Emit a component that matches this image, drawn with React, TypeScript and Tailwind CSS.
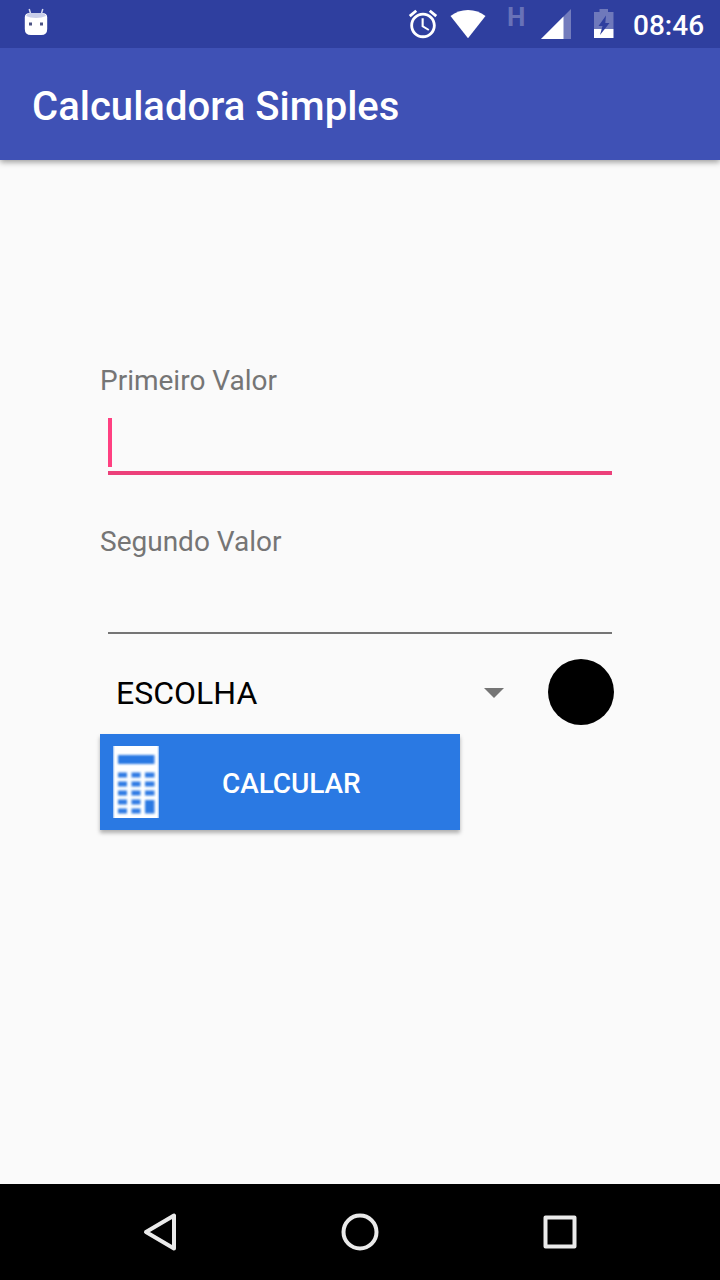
import React from 'react';

function AndroidHead() {
  return (
    <svg width="24" height="28" viewBox="0 0 24 28" className="mt-2">
      <path d="M5.200 1 7 7M18.800 1 17 7" stroke="#d5d9ee" strokeWidth="1.5" />
      <path d="M.8 9Q1 5 6 5h12q5 0 5.200 4v12q0 6-6 6H7q-6.200 0-6.200-6Z" fill="#fff" />
      <path d="M2 8Q3 5 7 5h10q4 0 5 3Q18 10 12 10T2 8Z" fill="#c9cfea" />
      <path d="M5 14.500h3v3H5zM16 14.500h3v3h-3z" fill="#4b5384" />
    </svg>
  );
}

function Alarm() {
  return (
    <svg width="34" height="34" viewBox="0 0 24 24" fill="#fff" className="mt-[7px]">
      <path d="M22 5.720l-4.600-3.860-1.290 1.530 4.600 3.860L22 5.720zM7.880 3.390L6.600 1.860 2 5.710l1.290 1.530 4.590-3.850zM12.500 8H11v6l4.750 2.850.750-1.230-4-2.370V8zM12 4c-4.970 0-9 4.030-9 9s4.020 9 9 9c4.970 0 9-4.030 9-9s-4.030-9-9-9zm0 16c-3.870 0-7-3.130-7-7s3.130-7 7-7 7 3.130 7 7-3.130 7-7 7z" />
    </svg>
  );
}

function Wifi() {
  return (
    <svg width="36" height="30" viewBox="0 0 36 30" className="ml-[10px] mt-[9px]">
      <path d="M.5 7Q8 1 18 1t17.500 6L18 29.200Z" fill="#fff" />
    </svg>
  );
}

function Signal() {
  return (
    <svg width="30" height="30" viewBox="0 0 30 30" className="ml-4 mt-[9px]">
      <path d="M0 30 30 0v30Z" fill="#737cbd" />
      <path d="M0 30 22.500 7.500V30Z" fill="#fff" />
    </svg>
  );
}

function Battery() {
  return (
    <svg width="20" height="30" viewBox="0 0 20 30" className="ml-[23px] mt-[9px]">
      <path d="M5.500 0h8.500v3H19.500v17H0V3h5.500Z" fill="#6f79bb" />
      <path d="M0 20h19.500v9H0Z" fill="#fff" />
      <path d="m12 6.500-7.500 10.500h4L6 26l9.500-12h-4.200Z" fill="#2f3f9f" />
    </svg>
  );
}

function CalculatorIcon() {
  const rows = [27, 36, 45, 54, 63];
  return (
    <svg width="48" height="74" viewBox="-1 -1 48 74" className="ml-3 mt-[11px] shrink-0">
      <defs>
        <filter id="soft-keys" x="-10%" y="-10%" width="120%" height="120%">
          <feGaussianBlur stdDeviation="0.9" />
        </filter>
      </defs>
      <path d="M.3 0h45.400v72H.3Z" fill="#fff" />
      <path d="M0 0h1.300v72H0zM44.700 0H46v72h-1.300z" fill="#a9caf5" />
      <g fill="#2a79e3" filter="url(#soft-keys)">
        <rect x="5" y="9" width="36.500" height="9" />
        {rows.map((y, i) => (
          <React.Fragment key={y}>
            <rect x="5" y={y - 0.5} width="9" height="5" />
            <rect x="18.500" y={y - 0.5} width="9" height="5" />
            {i < 3 && <rect x="32" y={y - 0.5} width="9.500" height="5" />}
          </React.Fragment>
        ))}
        <rect x="32" y="54" width="9.500" height="13.500" />
      </g>
    </svg>
  );
}

export default function App() {
  return (
    <div className="flex h-[1280px] w-[720px] flex-col overflow-hidden bg-[#fafafa] font-['Roboto',sans-serif]">
      <div className="z-20 flex h-12 shrink-0 items-start bg-[#2f3f9f] pl-6 pr-[15px]">
        <AndroidHead />
        <div className="flex flex-1 items-start justify-end">
          <Alarm />
          <Wifi />
          <span className="ml-[21px] mt-[4px] w-[18px] text-[26px] font-bold leading-[26px] text-[#6872b8]">H</span>
          <Signal />
          <Battery />
          <span className="ml-[19px] mt-[10px] w-[72px] whitespace-nowrap text-[28px] font-medium leading-8 text-white">08:46</span>
        </div>
      </div>
      <header className="z-10 flex h-28 shrink-0 items-center bg-[#3f51b5] pl-8 shadow-[0_2px_6px_rgba(0,0,0,0.4)]">
        <h1 className="pt-[6px] text-[40px] font-medium leading-[48px] tracking-[0.03px] text-white">Calculadora Simples</h1>
      </header>
      <main className="flex flex-1 flex-col pl-[100px] pt-[202px]">
        <label className="h-[38px] text-[28px] leading-[38px] text-[#757575]">Primeiro Valor</label>
        <div className="ml-2 mt-[18px] flex h-[57px] w-[504px] border-b-4 border-[#ec407a]">
          <span className="h-[49px] w-1 bg-[#ff4081]" />
        </div>
        <label className="mt-12 h-[38px] text-[28px] leading-[38px] text-[#757575]">Segundo Valor</label>
        <div className="ml-2 h-[73px] w-[504px] border-b-2 border-[#757575]" />
        <div className="mt-[18px] flex h-20 items-center">
          <span className="ml-4 w-[368px] pt-[2px] text-[32px] leading-[38px] text-black">ESCOLHA</span>
          <svg width="20" height="10" viewBox="0 0 20 10" fill="#757575" className="mt-[2px]">
            <path d="M0 0h20L10 10Z" />
          </svg>
          <span className="ml-11 size-[66px] rounded-full bg-black" />
        </div>
        <button className="mt-[2px] flex h-24 w-[360px] items-start bg-[#2a79e3] text-left shadow-[0_3px_4px_rgba(0,0,0,0.3)]">
          <CalculatorIcon />
          <span className="ml-[62px] mt-[34px] text-[28px] font-medium leading-8 tracking-[-0.1px] text-white">CALCULAR</span>
        </button>
      </main>
      <nav className="flex h-24 shrink-0 items-center justify-center gap-[160px] bg-black">
        <svg width="40" height="40" viewBox="0 0 40 40" fill="none" stroke="#eaeaea" strokeWidth="4" strokeLinejoin="round">
          <path d="M6 20 34 3.500v33Z" />
        </svg>
        <svg width="40" height="40" viewBox="0 0 40 40" fill="none" stroke="#eaeaea" strokeWidth="4">
          <circle cx="20" cy="20" r="16.500" />
        </svg>
        <svg width="40" height="40" viewBox="0 0 40 40" fill="none" stroke="#eaeaea" strokeWidth="4" strokeLinejoin="round">
          <path d="M5.500 5.500h29v29h-29Z" />
        </svg>
      </nav>
    </div>
  );
}
